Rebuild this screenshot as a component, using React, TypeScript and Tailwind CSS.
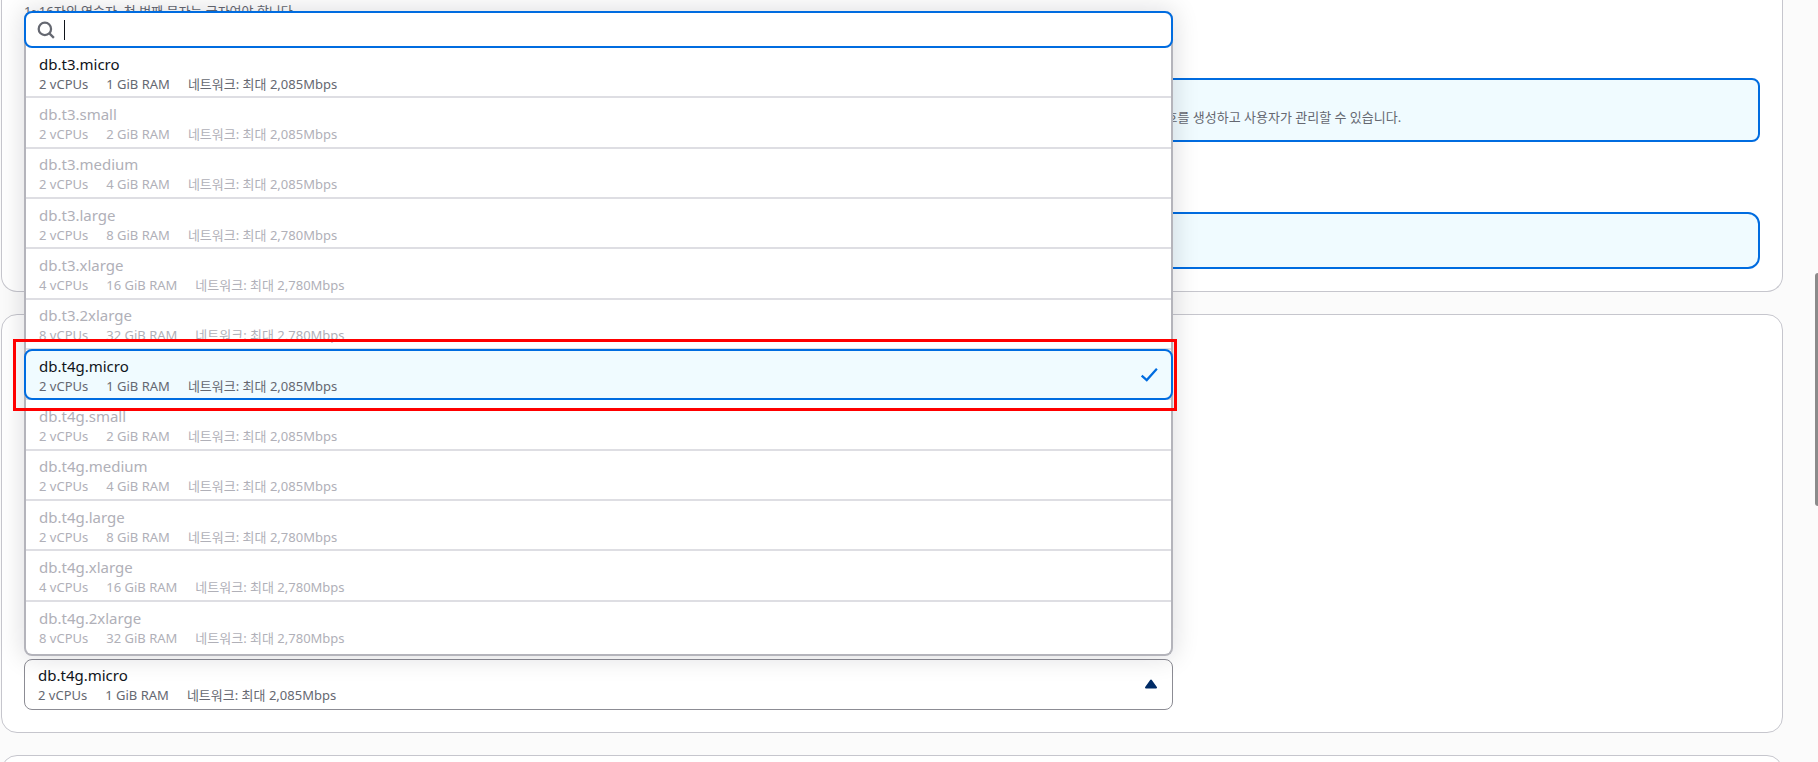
import { useState } from "react";

type Instance = {
  name: string;
  cpus: number;
  ram: number;
  network: string;
  enabled?: boolean;
};

const instances: Instance[] = [
  { name: "db.t3.micro", cpus: 2, ram: 1, network: "2,085", enabled: true },
  { name: "db.t3.small", cpus: 2, ram: 2, network: "2,085" },
  { name: "db.t3.medium", cpus: 2, ram: 4, network: "2,085" },
  { name: "db.t3.large", cpus: 2, ram: 8, network: "2,780" },
  { name: "db.t3.xlarge", cpus: 4, ram: 16, network: "2,780" },
  { name: "db.t3.2xlarge", cpus: 8, ram: 32, network: "2,780" },
  { name: "db.t4g.micro", cpus: 2, ram: 1, network: "2,085", enabled: true },
  { name: "db.t4g.small", cpus: 2, ram: 2, network: "2,085" },
  { name: "db.t4g.medium", cpus: 2, ram: 4, network: "2,085" },
  { name: "db.t4g.large", cpus: 2, ram: 8, network: "2,780" },
  { name: "db.t4g.xlarge", cpus: 4, ram: 16, network: "2,780" },
  { name: "db.t4g.2xlarge", cpus: 8, ram: 32, network: "2,780" },
];

function InstanceText({ item, muted }: { item: Instance; muted: boolean }) {
  return (
    <span className="block text-left">
      <span className={`block text-[15px] leading-[21px] ${muted ? "text-[#b0b0b8]" : "text-[#0f141a]"}`}>
        {item.name}
      </span>
      <span className={`flex gap-[18px] text-[13px] leading-[18px] ${muted ? "text-[#b0b0b8]" : "text-[#656871]"}`}>
        <span>{item.cpus} vCPUs</span>
        <span>{item.ram} GiB RAM</span>
        <span>네트워크: 최대 {item.network}Mbps</span>
      </span>
    </span>
  );
}

function Option({ item, selected, onSelect }: { item: Instance; selected: boolean; onSelect: () => void }) {
  return (
    <li className="relative border-b-2 border-[#dedee3] last:border-b-0">
      <button
        type="button"
        disabled={!item.enabled}
        aria-pressed={selected}
        onClick={onSelect}
        className={
          selected
            ? "absolute -inset-x-0.5 -top-px -bottom-0.5 z-10 flex items-center justify-between rounded-lg border-2 border-[#006ce0] bg-[#f0fbff] px-[13px] pt-px"
            : "flex h-full w-full items-center px-[13px] pt-0.5"
        }
      >
        <InstanceText item={item} muted={!item.enabled} />
        {selected && (
          <svg viewBox="0 0 16 16" className="size-[18px]" fill="none" stroke="#006ce0" strokeWidth="2" aria-hidden="true">
            <path d="m1.500 8.500 4.500 4L15 2.500" />
          </svg>
        )}
      </button>
      {selected && (
        <span className="pointer-events-none absolute -top-[11px] -right-[6px] -bottom-[13px] -left-[13px] z-20 border-3 border-[#ff0000]" />
      )}
    </li>
  );
}

export default function App() {
  const [selected, setSelected] = useState("db.t4g.micro");
  const [query, setQuery] = useState("");
  const current = instances.find((i) => i.name === selected) ?? instances[0];

  return (
    <main className="relative h-screen overflow-hidden bg-[#fbfbfb] pr-[35px] pl-px font-['Noto_Sans','Noto_Sans_CJK_KR',sans-serif]">
      <section className="flex flex-col rounded-b-2xl border border-t-0 border-[#c6c6cd] bg-white px-[22px] pt-0.5 pb-[22px]">
        <p className="h-[76px] text-[13px] leading-[18px] text-[#656871]">1~16자의 영숫자. 첫 번째 문자는 글자여야 합니다.</p>
        <div className="flex h-16 items-center justify-center rounded-lg border-2 border-[#006ce0] bg-[#f0fbff]">
          <p className="w-full pt-3.5 pl-[1049px] text-[13px] leading-[18px] whitespace-nowrap text-[#656871]">
            사용자가 직접 암호를 생성하고 사용자가 관리할 수 있습니다.
          </p>
        </div>
        <div className="mt-[70px] h-[57px] rounded-xl border-2 border-[#006ce0] bg-[#f0fbff]" />
      </section>

      <section className="mt-[22px] flex h-[419px] flex-col justify-end rounded-2xl border border-[#c6c6cd] bg-white px-[22px] pb-[22px]">
        <div className="relative w-[66.2%]">
          <button
            type="button"
            aria-expanded="true"
            className="flex h-[51px] w-full items-center justify-between rounded-lg border border-[#8c8c94] bg-white pr-[15px] pb-px pl-[13px]"
          >
            <InstanceText item={current} muted={false} />
            <svg viewBox="0 0 12 10" className="h-[10px] w-3" fill="#002b66" stroke="#002b66" strokeWidth="2" strokeLinejoin="round" aria-hidden="true">
              <path d="M6 1.500 11 8.500H1z" />
            </svg>
          </button>
          <div className="absolute inset-x-0 bottom-full z-30 mb-[3px] rounded-lg border-2 border-t-0 border-[#b4b4bb] bg-white pb-0.5 shadow-[0_0_24px_3px_rgba(0,7,22,0.12)]">
            <label className="-mx-0.5 flex h-[37px] items-center gap-2 rounded-lg border-2 border-[#006ce0] bg-white px-[11px]">
              <svg viewBox="0 0 16 16" className="size-[18px] shrink-0" fill="none" stroke="#656871" strokeWidth="2" aria-hidden="true">
                <circle cx="7" cy="7" r="5.500" />
                <path d="m11 11 4 4" />
              </svg>
              <span className="flex flex-1 items-center pl-px">
                <span className="h-5 w-px bg-[#0f141a]" />
                <input
                  autoFocus
                  aria-label="인스턴스 검색"
                  value={query}
                  onChange={(e) => setQuery(e.target.value)}
                  className="w-full bg-transparent text-[15px] text-[#0f141a] caret-transparent outline-none"
                />
              </span>
            </label>
            <ul className="grid min-h-[604px] grid-rows-12">
              {instances.map((item) => (
                <Option key={item.name} item={item} selected={item.name === selected} onSelect={() => setSelected(item.name)} />
              ))}
            </ul>
          </div>
        </div>
      </section>

      <section className="mt-[22px] h-20 rounded-2xl border border-[#c6c6cd] bg-white" />
      <div className="absolute top-[273px] right-0 h-[233px] w-[3px] rounded-l-sm bg-[#8b8b8b]" />
    </main>
  );
}
